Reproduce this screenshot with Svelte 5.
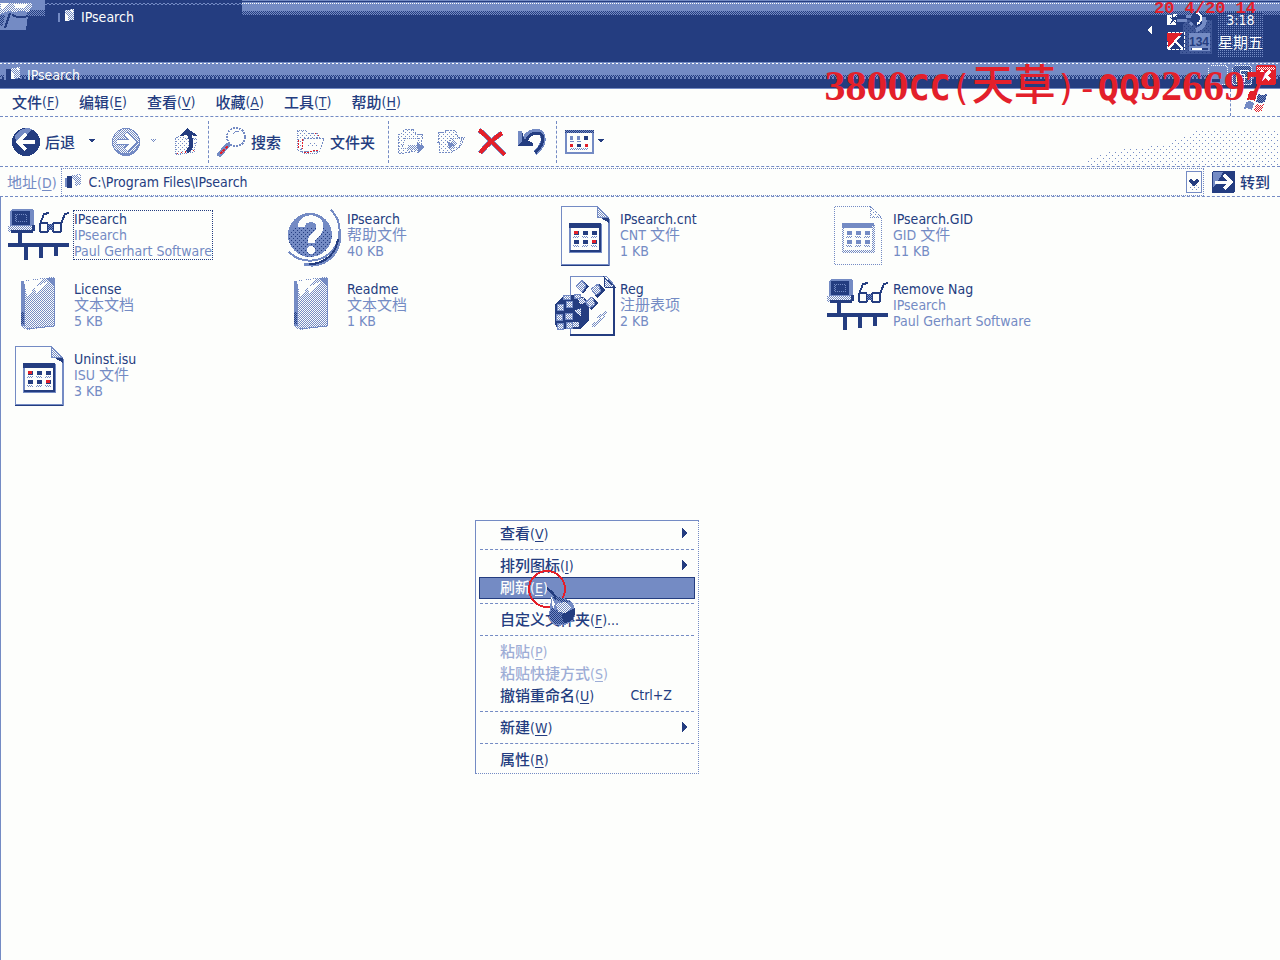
<script>
  const menus = [['文件', 'F'], ['编辑', 'E'], ['查看', 'V'], ['收藏', 'A'], ['工具', 'T'], ['帮助', 'H']];

  const files = [
    { icon: 'app', name: 'IPsearch', kind: 'IPsearch', info: 'Paul Gerhart Software', focus: true },
    { icon: 'help', name: 'IPsearch', han: '帮助文件', info: '40 KB' },
    { icon: 'sheet', name: 'IPsearch.cnt', kind: 'CNT ', han: '文件', info: '1 KB' },
    { icon: 'sheet', faded: true, name: 'IPsearch.GID', kind: 'GID ', han: '文件', info: '11 KB' },
    { icon: 'note', name: 'License', han: '文本文档', info: '5 KB' },
    { icon: 'note', name: 'Readme', han: '文本文档', info: '1 KB' },
    { icon: 'reg', name: 'Reg', han: '注册表项', info: '2 KB' },
    { icon: 'app', name: 'Remove Nag', kind: 'IPsearch', info: 'Paul Gerhart Software' },
    { icon: 'sheet', name: 'Uninst.isu', kind: 'ISU ', han: '文件', info: '3 KB' }
  ];

  const context = [
    { label: '查看', key: 'V', sub: true },
    null,
    { label: '排列图标', key: 'I', sub: true },
    { label: '刷新', key: 'E', active: true },
    null,
    { label: '自定义文件夹', key: 'F', tail: '...' },
    null,
    { label: '粘贴', key: 'P', disabled: true },
    { label: '粘贴快捷方式', key: 'S', disabled: true },
    { label: '撤销重命名', key: 'U', shortcut: 'Ctrl+Z' },
    null,
    { label: '新建', key: 'W', sub: true },
    null,
    { label: '属性', key: 'R' }
  ];

  const cells = [[0, 0], [9, 0], [18, 0], [0, 9], [9, 9], [18, 9]];
</script>

<svg class="defs" aria-hidden="true">
  <defs>
    <pattern id="mw" width="2" height="2" patternUnits="userSpaceOnUse">
      <rect width="2" height="2" fill="#fdfefc" /><path d="M0 0h1v1h1v1H1V1H0z" fill="#748bc4" />
    </pattern>
    <pattern id="dm" width="2" height="2" patternUnits="userSpaceOnUse">
      <rect width="2" height="2" fill="#748bc4" /><path d="M0 0h1v1h1v1H1V1H0z" fill="#243d80" />
    </pattern>
    <pattern id="dots" width="4" height="4" patternUnits="userSpaceOnUse">
      <path d="M0 0h1v1H0zM2 2h1v1H2z" fill="#748bc4" />
    </pattern>
    <pattern id="ddots" width="4" height="4" patternUnits="userSpaceOnUse">
      <rect width="4" height="4" fill="#748bc4" /><path d="M0 0h1v1H0zM2 2h1v1H2z" fill="#243d80" />
    </pattern>
    <pattern id="sparse" width="6" height="6" patternUnits="userSpaceOnUse">
      <path d="M0 1h1v1H0zM3 4h1v1H3z" fill="#748bc4" />
    </pattern>
    <pattern id="rw" width="2" height="2" patternUnits="userSpaceOnUse">
      <rect width="2" height="2" fill="#fdfefc" /><path d="M0 0h1v1h1v1H1V1H0z" fill="#e3202a" />
    </pattern>
  </defs>
</svg>

{#snippet miniIcon()}
  <svg class="mini" width="20" height="18" viewBox="0 0 20 18">
    <path d="M1 5h2v9H1z" fill="#748bc4" /><path d="M3 3h5v12H3z" fill="#243d80" />
    <path d="M8 2l9-1v11l-9 1z" fill="url(#mw)" /><path d="M8 5l3 3v5H8zM12 2h4v3z" fill="#fdfefc" />
  </svg>
{/snippet}

{#snippet fileIcon(kind, faded)}
  <svg class="fileicon" width="60" height="60" viewBox="0 0 60 60">
    {#if kind === 'app'}
      <path d="M2 5l2-2h20l2 2v16H2z" fill="#748bc4" />
      <path d="M4 5h18v14H4z" fill="#243d80" /><path d="M7 8h12v8H7z" fill="url(#dm)" /><path d="M9 9h9v6H9z" fill="#243d80" />
      <path d="M0 20h25v6H0z" fill="url(#mw)" /><path d="M3 24h22v3H3zM24 19h3v6h-3z" fill="#243d80" />
      <path d="M10 27h4v10h-4zM0 37h61v4H0zM16 41h4v13h-4zM31 41h4v11h-4zM46 41h4v9h-4z" fill="#243d80" />
      <g fill="none" stroke="#243d80" stroke-width="2">
        <path d="M33 17h6l1 2v6l-1 1h-6l-1-1v-7zM46 17h6l1 1v7l-1 1h-6l-1-1v-7zM40 19h5M40 23h5M32 18l4-10 5-1M53 18l4-10 4-1" />
      </g>
      <path d="M40 18h5v6h-5z" fill="url(#dm)" />
    {:else if kind === 'help'}
      <path d="M50 4A28 28 0 0 1 8 46" fill="none" stroke="#748bc4" stroke-width="2" />
      <path d="M58 25A28 28 0 0 1 23 58" fill="none" stroke="#748bc4" stroke-width="3" />
      <path d="M57 33A28 28 0 0 1 28 58" fill="none" stroke="#243d80" stroke-width="2" />
      <circle cx="29" cy="29" r="22" fill="#748bc4" />
      <path d="M7 29a22 22 0 0 0 44 0l-6-8H13z" fill="url(#ddots)" />
      <path d="M20 21c1-11 19-11 19 0 0 8-9 7-9 16" fill="none" stroke="#fdfefc" stroke-width="7" />
      <circle cx="30" cy="44" r="4" fill="#fdfefc" />
    {:else if kind === 'note'}
      <path d="M14 5l20-3 12-1v49l-27 4-6-3z" fill="url(#mw)" />
      <path d="M16 5l18-2-15 18zM27 11l12-5-11 13z" fill="#fdfefc" />
      <path d="M13 5h2l2 5v40h-4z" fill="#748bc4" /><path d="M13 36h3v12h-3z" fill="url(#dm)" />
      <path d="M38 2h9v10z" fill="#748bc4" /><path d="M46 11v39l-28 3" fill="none" stroke="#748bc4" />
    {:else if kind === 'sheet'}
      <path d="M7.500.5h36l11 11v47h-47z" fill="#fdfefc" stroke="#748bc4" stroke-dasharray={faded ? '1 1' : null} />
      <path d="M43.500.5v11h11z" fill={faded ? 'url(#dots)' : 'url(#mw)'} stroke="#748bc4" stroke-dasharray={faded ? '1 1' : null} />
      {#if !faded}<path d="M7 58h49v2H7zM54 13h2v47h-2z" fill="#748bc4" /><path d="M7 59h48v1H7zM47 12h8v5z" fill="#243d80" />{/if}
      <path d="M15.500 18.500h31v27h-31z" fill="#fdfefc" stroke={faded ? 'url(#mw)' : '#748bc4'} stroke-width="2" />
      <path d="M15 17h32v5H15z" fill={faded ? '#748bc4' : '#243d80'} />
      <path d="M45 20h2v26H16v-2h29z" fill={faded ? 'url(#mw)' : '#243d80'} />
      {#each cells as [x, y], i}
        <path d="M{20 + x} {25 + y}h5v4h-5z" fill={faded ? '#748bc4' : '#243d80'} />
        <path d="M{19 + x} {30 + y}h6v2h-6z" fill="url(#mw)" />
        {#if (i === 0 || i === 5) && !faded}<path d="M{20 + x} {25 + y}h4v3h-4z" fill="#e3202a" />{/if}
      {/each}
    {:else}
      <path d="M16.500.5h36l8 9v49h-44z" fill="#fdfefc" stroke="#748bc4" />
      <path d="M50 1l11 10H51z" fill="url(#mw)" stroke="#243d80" /><path d="M59 10h2v50H16v-2h43z" fill="#243d80" />
      <path d="M1 28l8-8 14-2 12 7v20l-9 8H4l-3-5z" fill="#243d80" />
      <path d="M3 28h6v6H3zM12 25h6v6h-6zM2 38h6v6H2zM11 37h7v6h-7zM3 47h6v6H3zM12 46h6v6h-6zM9 19h7v4H9zM20 18h6v4h-6z" fill="url(#mw)" stroke="#748bc4" />
      <path d="M20 35l7-3v8zM24 23l6-2 1 6-5 1zM19 46h6v5h-6z" fill="url(#mw)" />
      <path d="M22 10l6-6 7 6-6 8zM37 13l8-5 7 6-9 8zM31 26l7-5 7 6-8 7z" fill="#243d80" />
      <path d="M22 10l6-6 4 6-4 6zM37 13l7-5 3 7-5 4zM31 26l7-5 3 7-5 4z" fill="url(#mw)" stroke="#748bc4" />
      <path d="M38 50l9-8M40 50l9-8M43 42l6-4M46 41l6-5M49 42l3-6" stroke="url(#mw)" stroke-width="2" />
    {/if}
  </svg>
{/snippet}

<div class="page">
  <header class="taskbar">
    <button class="start" aria-label="开始">
      <svg width="45" height="30" viewBox="0 0 45 30">
        <rect width="45" height="16" fill="#748bc4" /><path d="M27 10h18v6H27z" fill="url(#dm)" />
        <path d="M0 3h32v3l-3 6-8-1-9 1-3-1-9 3z" fill="url(#mw)" /><path d="M1 3h9l-7 6H1zM14 4h14l-4 4h-9z" fill="#fdfefc" />
        <path d="M0 16l8-2 20 2-2 14H0z" fill="#748bc4" />
        <path d="M12 15c6 3 11 3 16 1M10 13L5 28" fill="none" stroke="#243d80" stroke-width="2" />
        <path d="M0 15h5L3 26H0z" fill="url(#dm)" /><path d="M28 16h17v14H26z" fill="#243d80" />
      </svg>
    </button>
    <button class="task">{@render miniIcon()}<span>IPsearch</span></button>
    <div class="tray">
      <svg width="66" height="58" viewBox="0 0 66 58">
        <path d="M6 26v8l-5-4z" fill="#fdfefc" />
        <path d="M38 20h28v34H34z" fill="url(#ddots)" opacity=".35" />
        <path d="M21 15h5v5h4v5h-9zM27 14h4v3h-4z" fill="#fdfefc" /><path d="M24 17l7 7M31 15l-7 9" stroke="#243d80" />
        <path d="M31 20h10M40 16h6l2 5-4 4" stroke="#748bc4" stroke-width="3" fill="none" />
        <circle cx="52" cy="19" r="7" fill="#243d80" /><path d="M50 13c6 0 7 8 1 11" fill="none" stroke="#fdfefc" stroke-width="2" />
        <path d="M58 17c2 7-2 11-8 13" fill="none" stroke="#748bc4" stroke-width="4" />
        <path d="M21.500 32.500h17v17h-17z" fill="#243d80" stroke="#fdfefc" stroke-dasharray="3 1" />
        <path d="M21 33h15L22 49z" fill="#e3202a" /><path d="M22 49l12-13M30 42l7 7" stroke="#fdfefc" stroke-width="2" />
        <path d="M43 33h21v18H43z" fill="#748bc4" />
        <text x="43" y="46" class="count">134</text>
        <path d="M45 48h17v2H45z" fill="#243d80" /><path d="M46 48h10v2H46z" fill="#fdfefc" />
      </svg>
      <div class="clock"><time>3:18</time><span>星期五</span></div>
    </div>
  </header>

  <div class="titlebar">
    {@render miniIcon()}<h1>IPsearch</h1>
    <div class="winbtns">
      <button aria-label="最小化"><svg width="20" height="20" viewBox="0 0 20 20"><rect x=".5" y=".5" width="19" height="19" rx="3" fill="#748bc4" stroke="url(#mw)" /><path d="M4 14h8v3H4z" fill="#243d80" /></svg></button>
      <button aria-label="还原"><svg width="20" height="20" viewBox="0 0 20 20"><rect x=".5" y=".5" width="19" height="19" rx="3" fill="url(#dm)" stroke="url(#mw)" /><path d="M8 5h8v7H8zM4 9h8v7H4z" fill="none" stroke="#fdfefc" /></svg></button>
      <button aria-label="关闭"><svg width="20" height="20" viewBox="0 0 20 20"><rect width="20" height="20" rx="3" fill="#e3202a" /><path d="M1 2h18v3H1z" fill="url(#rw)" /><path d="M5 6l9 9M14 6l-9 9" stroke="#fdfefc" stroke-width="3" /></svg></button>
    </div>
  </div>

  <nav class="menubar">
    {#each menus as [label, key]}
      <button>{label}<span class="lat">(<u>{key}</u>)</span></button>
    {/each}
    <div class="flag">
      <svg width="28" height="27" viewBox="0 0 28 27">
        <path d="M7 3c4-2 6-1 8 1l-2 8c-3-2-5-2-8-1z" fill="#e3202a" /><path d="M16 5c3 1 6 1 9 0l-2 8c-3 1-6 1-9 0z" fill="url(#dm)" />
        <path d="M4 13c3-1 6-1 8 1l-2 7c-3-2-5-2-8-1z" fill="#748bc4" /><path d="M14 15c3 1 5 1 8 0l-2 7c-3 1-5 1-8 0z" fill="url(#rw)" />
      </svg>
    </div>
  </nav>

  <div class="toolbar">
    <button class="tb back">
      <svg width="30" height="30" viewBox="0 0 30 30"><circle cx="15" cy="15" r="14" fill="#243d80" /><path d="M4 9a14 14 0 0 1 17-7l-8 8-8 5z" fill="#748bc4" /><path d="M24 15H8M15 7l-8 8 8 8" fill="none" stroke="#fdfefc" stroke-width="4" /></svg>
      后退
    </button>
    <button class="drop" aria-label="后退列表"><svg width="8" height="5"><path d="M0 0h7L4 4z" fill="#243d80" /></svg></button>
    <button class="tb fwd" aria-label="前进">
      <svg width="30" height="30" viewBox="0 0 30 30"><circle cx="15" cy="15" r="13.500" fill="url(#mw)" stroke="#748bc4" /><path d="M6 24a13 13 0 0 0 21-5" fill="none" stroke="#748bc4" stroke-width="2" /><path d="M6 15h16M15 7l8 8-8 8" fill="none" stroke="#748bc4" stroke-width="6" /><path d="M6 15h16M15 7l8 8-8 8" fill="none" stroke="#fdfefc" stroke-width="4" /></svg>
    </button>
    <button class="drop" aria-label="前进列表"><svg width="8" height="5"><path d="M0 0h6L3 4z" fill="url(#mw)" /></svg></button>
    <button class="tb up" aria-label="向上">
      <svg width="26" height="30" viewBox="0 0 26 30"><path d="M1 12l6-4 3 3h13l-3 14-18 3z" fill="url(#dots)" stroke="#748bc4" stroke-dasharray="1 1" /><path d="M3 27l17-4" stroke="#e3202a" stroke-dasharray="1 3" /><path d="M13 25c6-5 5-10 2-18" fill="none" stroke="#243d80" stroke-width="4" /><path d="M6 9l7-8 11 8-10-1z" fill="#243d80" /></svg>
    </button>
    <i class="sep"></i>
    <button class="tb search">
      <svg width="30" height="30" viewBox="0 0 30 30"><circle cx="19" cy="10" r="9" fill="#fdfefc" stroke="#748bc4" stroke-width="2" stroke-dasharray="2 1" /><path d="M16 7l3-3h3" stroke="#748bc4" fill="none" /><path d="M1 29L12 17" stroke="#748bc4" stroke-width="5" /><path d="M3 27L11 19" stroke="#e3202a" stroke-width="2" stroke-dasharray="3 1" /></svg>
      搜索
    </button>
    <button class="tb folders">
      <svg width="30" height="26" viewBox="0 0 30 26"><path d="M1 1h9l2 3h9v4h3v12l-3 4H7l-6-3z" fill="url(#dots)" stroke="#748bc4" stroke-dasharray="1 1" /><path d="M8 9h20l-4 13H5z" fill="#fdfefc" stroke="#748bc4" stroke-dasharray="2 1" /><path d="M11 13h10v5H10z" fill="url(#dots)" /><path d="M2 11v9M6 10v10M8 24l14-3M19 4l4 3" stroke="#e3202a" stroke-dasharray="2 1" /></svg>
      文件夹
    </button>
    <i class="sep"></i>
    <button class="tb" aria-label="移动到">
      <svg width="30" height="28" viewBox="0 0 30 28"><path d="M1 6h3l4-5h8l3 5h7l-3 16-21 4z" fill="url(#dots)" stroke="#748bc4" stroke-dasharray="2 1" /><path d="M8 10h14l-3 10H5z" fill="#fdfefc" stroke="#748bc4" stroke-dasharray="1 1" /><path d="M11 17h9v-4l8 6-8 7v-4h-9z" fill="url(#mw)" /><path d="M20 15l8 4-7 6z" fill="#748bc4" /></svg>
    </button>
    <button class="tb" aria-label="复制到">
      <svg width="30" height="28" viewBox="0 0 30 28"><path d="M2 4h5l3-2h8l3 7h7l-5 10-10 6-11-1V14H1z" fill="url(#dots)" stroke="#748bc4" stroke-dasharray="2 1" /><path d="M14 10h11l-3 9H11z" fill="#fdfefc" stroke="#748bc4" stroke-dasharray="1 1" /><path d="M10 14h5v-5l6 7-8 7z" fill="url(#mw)" /><path d="M10 13l8 4-6 3z" fill="#748bc4" /></svg>
    </button>
    <button class="tb" aria-label="删除">
      <svg width="30" height="28" viewBox="0 0 30 28"><path d="M2 2c8 6 17 16 26 25M25 5C16 11 9 18 3 25" fill="none" stroke="#748bc4" stroke-width="5" /><path d="M2 2c8 6 17 16 26 25M25 5C16 11 9 18 3 25" fill="none" stroke="#e3202a" stroke-width="4" /></svg>
    </button>
    <button class="tb" aria-label="撤销">
      <svg width="30" height="28" viewBox="0 0 30 28"><path d="M6 14C10 4 18 1 24 5c5 6 1 14-6 20" fill="none" stroke="#748bc4" stroke-width="5" /><path d="M8 15C12 5 20 3 25 7c3 6-1 12-7 18" fill="none" stroke="#243d80" stroke-width="3" /><path d="M1 3h4l2 8 9 4v3H1z" fill="#243d80" /><path d="M1 3h4v10l-4 4z" fill="#748bc4" /></svg>
    </button>
    <i class="sep"></i>
    <button class="tb views" aria-label="查看">
      <svg width="30" height="24" viewBox="0 0 30 24"><rect x="1" y="1" width="27" height="22" fill="#fdfefc" stroke="#748bc4" stroke-width="2" /><path d="M0 0h29v3H0z" fill="url(#dm)" /><path d="M5 6h3v4H5zM12 6h3v4h-3zM5 11h4v1H5zM12 11h4v1h-4z" fill="#748bc4" /><path d="M19 6h4v4h-4zM12 14h4v3h-4z" fill="#243d80" /><path d="M5 14h3v3H5zM20 14h3v3h-3z" fill="#e3202a" /><path d="M5 18h18v2H5z" fill="url(#mw)" /></svg>
      <svg width="8" height="5"><path d="M0 0h7L4 4z" fill="#243d80" /></svg>
    </button>
    <svg class="ramp" width="192" height="42" viewBox="0 0 192 42"><path d="M0 42v-8l30-8 50-6 30-14h82v36z" fill="url(#sparse)" /></svg>
  </div>

  <div class="address">
    <label for="path">地址<span class="lat">(<u>D</u>)</span></label>
    <div class="field">
      {@render miniIcon()}
      <input id="path" value="C:\Program Files\IPsearch" />
      <button class="arrow" aria-label="地址列表"><svg width="16" height="22" viewBox="0 0 16 22"><rect x=".5" y=".5" width="15" height="21" fill="#fdfefc" stroke="#748bc4" /><path d="M3 14h10v5H3z" fill="url(#dots)" /><path d="M4 9l4 4 4-4" fill="none" stroke="#243d80" stroke-width="3" /></svg></button>
    </div>
    <button class="go">
      <svg width="24" height="22" viewBox="0 0 24 22"><rect width="23" height="22" rx="2" fill="#243d80" /><path d="M1 1h10L5 12 1 16z" fill="#748bc4" /><path d="M3 11h15M12 4l7 7-7 7" fill="none" stroke="#fdfefc" stroke-width="3" /></svg>
      转到
    </button>
  </div>

  <main>
    <ul class="files">
      {#each files as f}
        <li>
          {@render fileIcon(f.icon, f.faded)}
          <div class="meta" class:focus={f.focus}>
            <strong>{f.name}</strong>
            <div class="kind">{f.kind ?? ''}{#if f.han}<span class="han">{f.han}</span>{/if}</div>
            <span>{f.info}</span>
          </div>
        </li>
      {/each}
    </ul>
  </main>

  <div class="context" role="menu">
    {#each context as m}
      {#if m}
        <button role="menuitem" class:active={m.active} disabled={m.disabled}>
          <span>{m.label}<span class="lat">(<u>{m.key}</u>){m.tail ?? ''}</span></span>
          {#if m.shortcut}<span class="short">{m.shortcut}</span>{/if}
          {#if m.sub}<svg width="6" height="10"><path d="M0 0l6 5-6 5z" fill="#243d80" /></svg>{/if}
        </button>
      {:else}
        <hr />
      {/if}
    {/each}
    <svg class="pointer" width="60" height="64" viewBox="0 0 60 64">
      <circle cx="20" cy="20" r="18" fill="none" stroke="#e3202a" stroke-width="2" />
      <path d="M20 19l9 7 15 6c5 5 5 13 3 18-5 7-16 8-21 5-5-4-6-10-3-14l1-12z" fill="#748bc4" />
      <path d="M20 19l10 8 14 6-6 1-10-3zM25 39c-4 6-4 12 2 15 6 3 15 1 19-5z" fill="url(#dm)" />
      <path d="M29 35l9-2 7 5-5 6-9-1z" fill="url(#mw)" /><path d="M24 27l4 8-2 5z" fill="#fdfefc" />
      <path d="M34 46l14-7c1 11-4 15-11 15z" fill="#243d80" /><path d="M20 19l6 5 3 6" fill="none" stroke="#243d80" stroke-width="2" />
    </svg>
  </div>

  <div class="stamp">20 4/20 14</div>
  <div class="mark"><b>3800</b>CC<em>(</em><i>天草</i><em>)</em><em>-</em>QQ<b>926697</b></div>
</div>

<style>
  :global(body) { background: #fdfefc; }
  .page {
    --navy: #243d80;
    --mid: #748bc4;
    --paper: #fdfefc;
    --red: #e3202a;
    position: relative;
    display: flex;
    flex-direction: column;
    min-height: 100vh;
    overflow: hidden;
    color: var(--navy);
    background: var(--paper);
    font: 15px/16px "Noto Sans CJK SC", sans-serif;
  }
  .defs { position: absolute; width: 0; height: 0; }
  svg { display: block; flex: none; shape-rendering: crispEdges; }
  button {
    display: flex;
    align-items: center;
    padding: 0;
    border: 0;
    background: none;
    color: inherit;
    font: inherit;
    font-weight: 500;
    white-space: nowrap;
  }
  .lat, input, .short, .task, h1, time { font-family: "DejaVu Sans Condensed", "Noto Sans", sans-serif; font-size: 14px; font-weight: 400; }
  u { text-underline-offset: 2px; }

  .taskbar {
    display: flex;
    height: 62px;
    background:
      linear-gradient(var(--navy), var(--navy)) 0 1px / 100% 1px no-repeat,
      repeating-linear-gradient(90deg, var(--paper) 0 1px, transparent 1px 2px) 0 3px / 100% 1px no-repeat,
      repeating-conic-gradient(var(--navy) 0 25%, var(--mid) 0 50%) 0 11px / 2px 2px repeat-x,
      repeating-conic-gradient(var(--navy) 0 25%, var(--mid) 0 50%) 0 13px / 2px 2px repeat-x,
      linear-gradient(var(--mid) 0 15px, var(--navy) 15px);
  }
  .start { align-self: flex-start; }
  .task {
    gap: 4px;
    width: 197px;
    height: 62px;
    padding: 0 12px 28px;
    background: repeating-conic-gradient(var(--mid) 0 25%, var(--navy) 0 50%) 0 3px / 4px 2px repeat-x var(--navy);
    color: var(--paper);
  }
  .tray { display: flex; margin-left: auto; }
  .clock {
    display: flex;
    flex-direction: column;
    gap: 6px;
    padding: 12px 17px 4px 6px;
    color: var(--paper);
    background: repeating-conic-gradient(var(--navy) 0 75%, var(--mid) 0 100%) 0 0 / 2px 2px content-box;
    text-align: center;
  }
  .count { font: 700 12px "Liberation Sans", sans-serif; fill: #243d80; }

  .titlebar {
    display: flex;
    align-items: center;
    gap: 4px;
    height: 26px;
    padding: 0 4px 0 3px;
    border-bottom: 1px solid var(--mid);
    color: var(--paper);
    background:
      repeating-linear-gradient(90deg, var(--paper) 0 2px, transparent 2px 4px) 0 1px / 100% 1px no-repeat,
      repeating-conic-gradient(var(--navy) 0 25%, var(--mid) 0 50%) 0 13px / 2px 2px repeat-x,
      repeating-conic-gradient(var(--navy) 0 75%, var(--mid) 0 100%) 0 15px / 4px 4px repeat-x,
      linear-gradient(var(--mid) 0 13px, var(--navy) 13px);
  }
  h1 { margin: 0; }
  .winbtns { display: flex; gap: 4px; margin-left: auto; }

  .menubar {
    display: flex;
    gap: 20px;
    height: 27px;
    padding-left: 12px;
    border-bottom: 1px dashed var(--mid);
  }
  .menubar button { padding-bottom: 2px; }
  .flag { margin-left: auto; padding: 0 10px 0 11px; border-left: 1px dashed var(--mid); }

  .toolbar {
    display: flex;
    align-items: center;
    height: 49px;
    padding-left: 11px;
    border-bottom: 1px dashed var(--mid);
  }
  .tb { gap: 4px; margin-right: 10px; }
  .drop { margin-right: 15px; }
  .tb.back { margin-right: 13px; }
  .tb.up { margin-right: 9px; }
  .tb.search { margin-right: 15px; }
  .tb.folders { margin-right: 14px; }
  .tb.views { gap: 2px; }
  .sep { flex: none; width: 0; height: 42px; margin-right: 8px; border-left: 1px dashed var(--mid); }
  .tb + .sep { margin-left: -1px; }
  .ramp { align-self: flex-end; margin-left: auto; }

  .address {
    display: flex;
    align-items: center;
    gap: 4px;
    padding: 1px 10px 0 7px;
    border-bottom: 1px dashed var(--mid);
  }
  label { color: var(--mid); }
  .field {
    display: flex;
    flex: 1;
    align-items: center;
    height: 26px;
    padding: 0 1px 0 2px;
    border: 1px dotted var(--mid);
  }
  .field input { flex: 1; min-width: 0; padding: 0 5px; border: 0; outline: 0; background: none; color: var(--navy); }
  .go { gap: 4px; padding-left: 4px; }

  main { flex: 1; border-left: 1px solid var(--mid); }
  .files {
    display: grid;
    grid-template-columns: repeat(auto-fill, 273px);
    gap: 10px 0;
    margin: 0;
    padding: 9px 0 0 7px;
    list-style: none;
  }
  li { display: flex; gap: 5px; }
  .fileicon { overflow: visible; }
  .meta {
    display: flex;
    flex-direction: column;
    align-self: flex-start;
    margin-top: 4px;
    color: var(--mid);
    font-family: "DejaVu Sans Condensed", "Noto Sans CJK SC", sans-serif;
    font-size: 14px;
    line-height: 16px;
    border: 1px solid transparent;
    white-space: nowrap;
  }
  .meta.focus { border: 1px dotted var(--navy); }
  .kind { height: 16px; white-space: pre; }
  .han { font-size: 15px; }
  strong { color: var(--navy); font-weight: 400; }

  .context {
    position: absolute;
    top: 520px;
    left: 475px;
    width: 224px;
    box-sizing: border-box;
    padding: 2px 3px;
    border: 1px solid var(--mid);
    border-right-style: dotted;
    border-bottom-style: dotted;
    background: var(--paper);
  }
  .context button { width: 100%; height: 22px; padding: 0 6px 2px 20px; border: 1px solid transparent; }
  .context button > svg { margin-left: auto; }
  .short { margin: 0 16px 0 auto; }
  .context button:disabled { color: #9dadd6; }
  .context button.active { background: var(--mid); border-color: var(--navy); color: var(--paper); }
  hr { height: 0; margin: 4px 1px 5px; border: 0; border-top: 1px dashed var(--mid); }
  .pointer { position: absolute; top: 48px; left: 51px; }

  .stamp {
    position: absolute;
    top: 0;
    right: 24px;
    color: var(--red);
    font: 700 17px/17px "Liberation Mono", monospace;
    white-space: pre;
  }
  .mark {
    position: absolute;
    top: 61px;
    right: 14px;
    display: flex;
    align-items: baseline;
    color: var(--red);
    font: 700 35px/42px "DejaVu Sans Mono", monospace;
    white-space: nowrap;
  }
  .mark b { font-family: "Liberation Serif", serif; font-size: 42px; }
  .mark i { font: 500 42px/42px "Noto Sans CJK SC", sans-serif; }
  .mark em { font-style: normal; font-weight: 400; }
</style>
